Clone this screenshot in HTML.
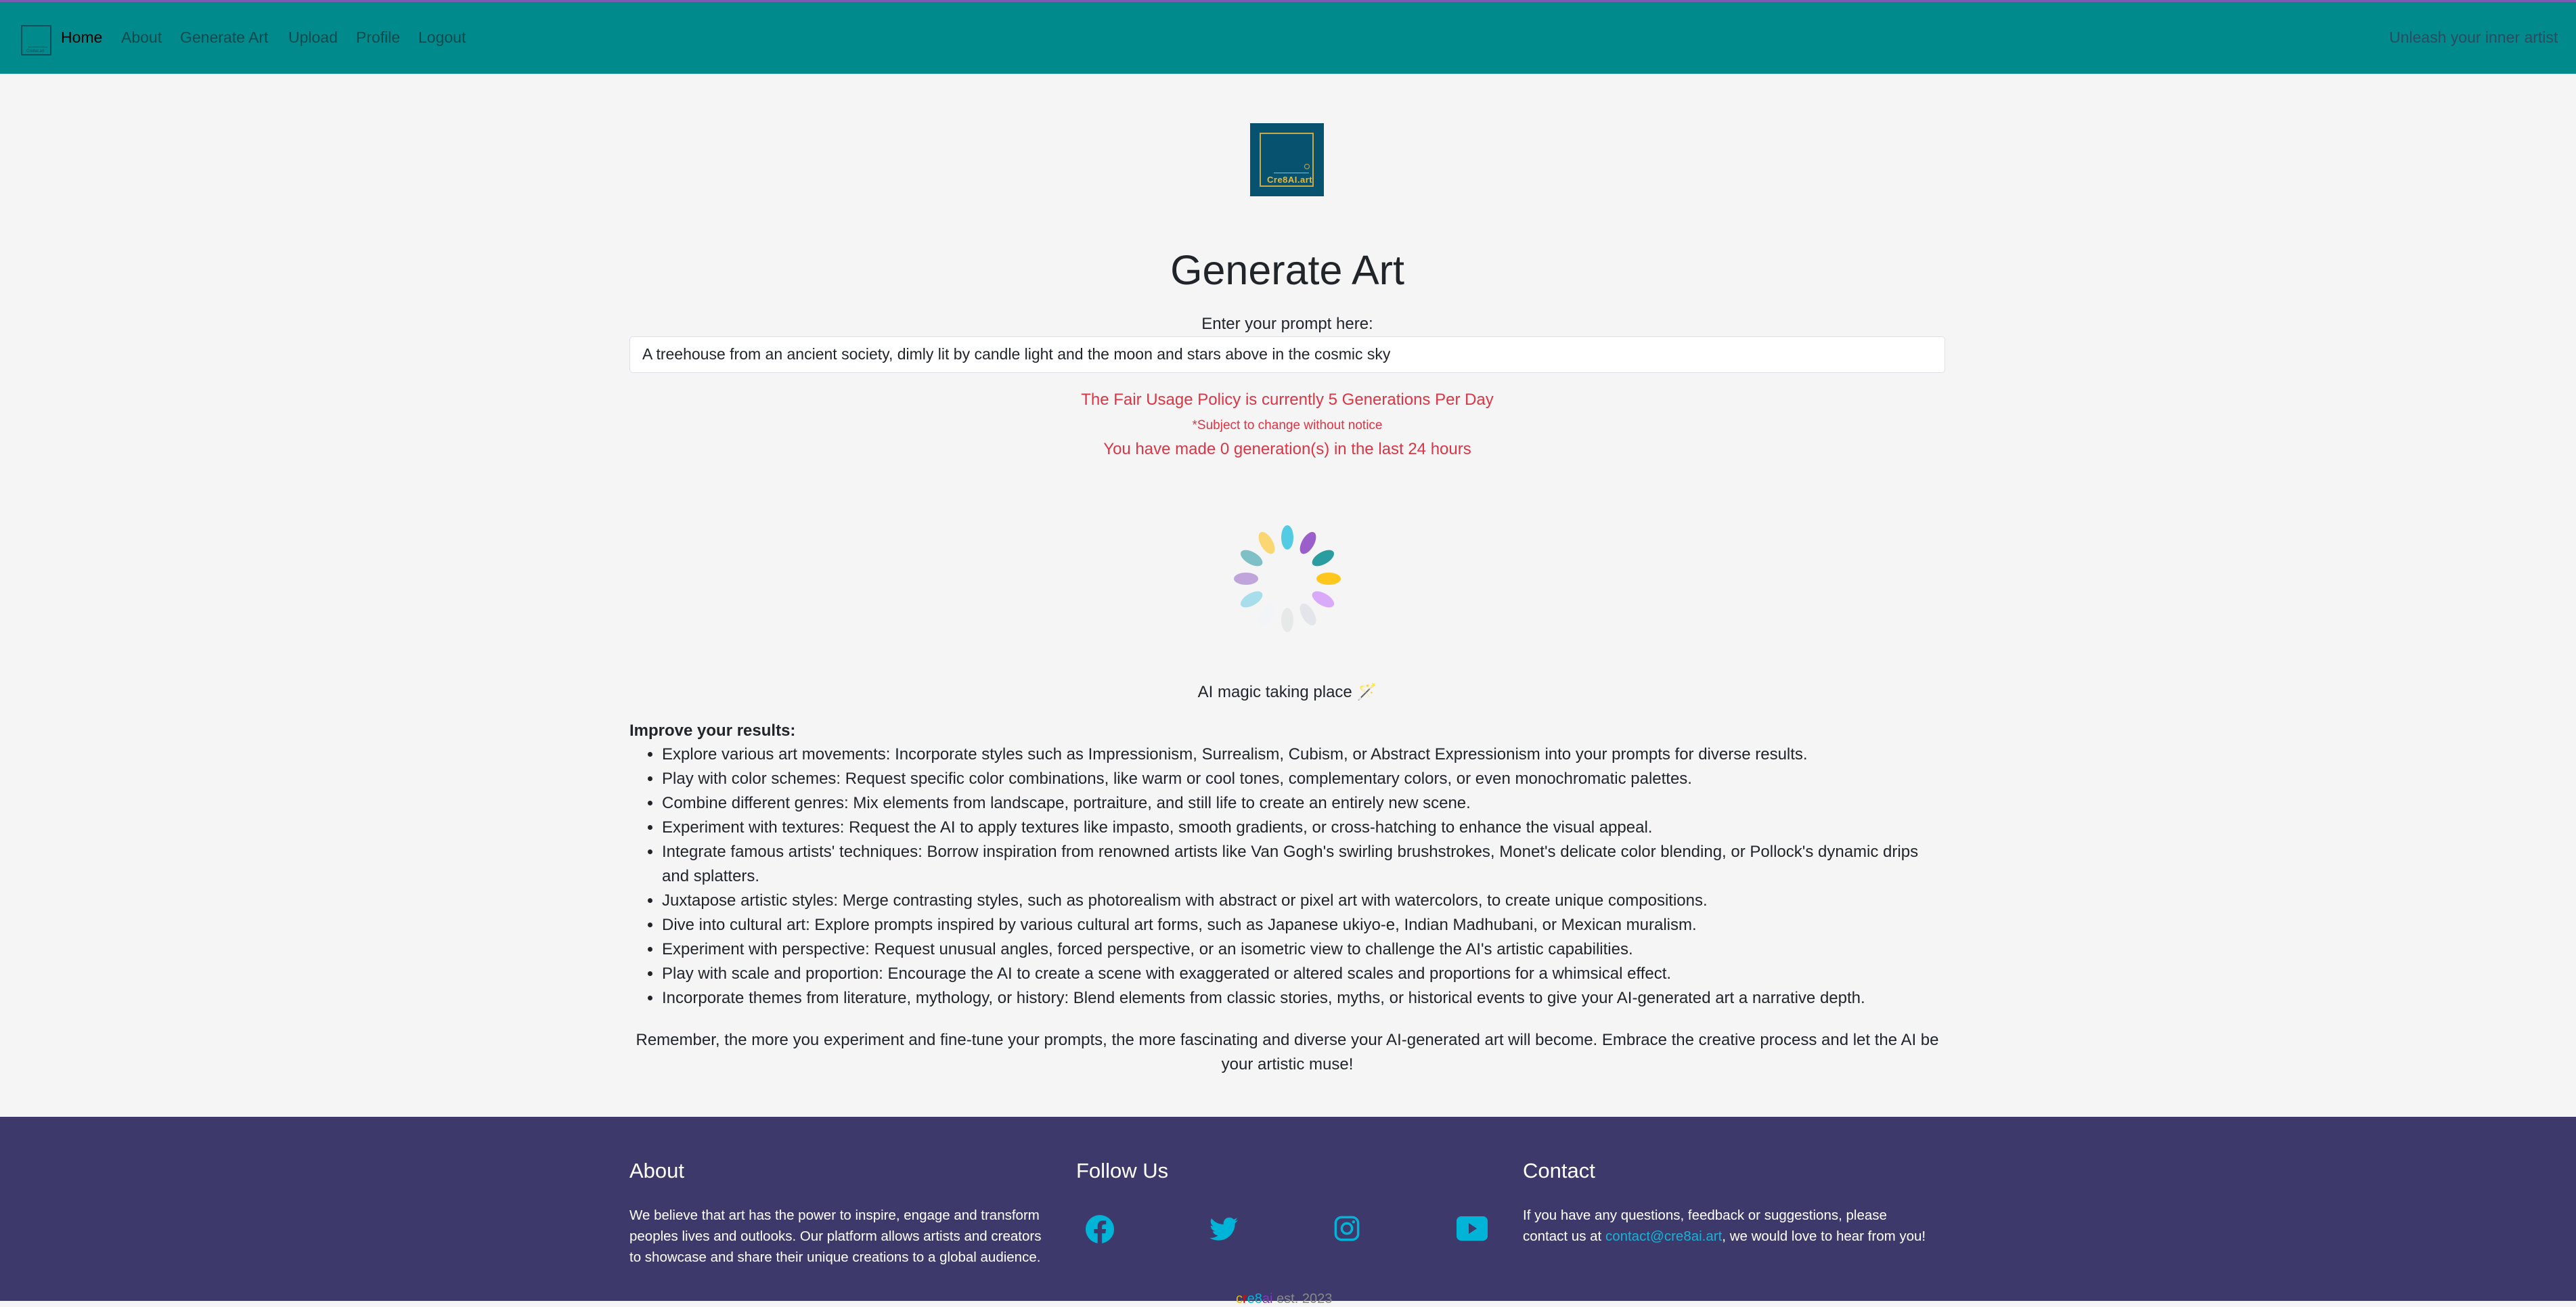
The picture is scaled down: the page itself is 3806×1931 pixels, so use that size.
<!DOCTYPE html>
<html><head><meta charset="utf-8"><style>
*{box-sizing:border-box;margin:0;padding:0}
body{width:3806px;height:1922px;overflow:hidden;background:#f5f5f5;font-family:"Liberation Sans",Arial,sans-serif;color:#212529;position:relative}
.nav{position:absolute;left:0;top:0;width:3806px;height:109px;background:#008a8c;border-top:3px solid #7c5cb3}
.nav .brand{position:absolute;left:31px;top:34px;width:45px;height:45px;border:2px solid #0b4f5c}
.nav a{position:absolute;top:39px;font-size:23px;color:#0b4a4d;text-decoration:none}
.abs{position:absolute}
.c{position:absolute;left:930px;width:1944px;text-align:center}
.red{color:#dc3545}
ul{position:absolute;left:978px;top:1097px;font-size:24px;line-height:36px;list-style:disc;white-space:nowrap}
li{padding-left:0}
.foot{position:absolute;left:0;top:1650px;width:3806px;height:272px;background:#3d3a6b;color:#fff}
.foot h5{position:absolute;top:62px;font-size:31px;font-weight:normal}
.foot p{position:absolute;top:130px;font-size:20.5px;line-height:31px;white-space:nowrap}
.petal{position:absolute;width:18px;height:36px;border-radius:50%;left:1893px;top:776px;transform-origin:9px 79px}
</style></head><body>
<div class="nav">
  <div class="brand"><div style="position:absolute;left:8px;right:4px;bottom:10px;height:1px;background:#0b4f5c"></div><div style="position:absolute;left:6px;bottom:1px;font-size:6px;color:#0b4f5c">Cre8ai.art</div></div>
  <a style="left:90px;color:#000">Home</a>
  <a style="left:179px">About</a>
  <a style="left:266px">Generate Art</a>
  <a style="left:426px">Upload</a>
  <a style="left:526px">Profile</a>
  <a style="left:618px">Logout</a>
  <a style="left:3530px;color:#2d4a60">Unleash your inner artist</a>
</div>

<div class="abs" style="left:1847px;top:182px;width:109px;height:108px;background:#07536f">
  <div style="position:absolute;left:14px;top:14px;width:80px;height:80px;border:2px solid #c9a845"></div>
  <div style="position:absolute;left:35px;top:73px;width:52px;height:1px;background:#d9b04a"></div>
  <div style="position:absolute;left:80px;top:60px;width:8px;height:8px;border:1px solid #c9a845;border-radius:50%"></div>
  <div style="position:absolute;left:25px;top:76px;font-size:13px;font-weight:bold;color:#e6b93c;letter-spacing:.5px">Cre8AI.art</div>
</div>

<div class="c" style="top:364px;font-size:61px">Generate Art</div>
<div class="c" style="top:465px;font-size:24px">Enter your prompt here:</div>
<div class="abs" style="left:930px;top:497px;width:1944px;height:54px;background:#fff;border:1px solid #dee2e6;border-radius:5px;font-size:23px;padding:12px 18px">A treehouse from an ancient society, dimly lit by candle light and the moon and stars above in the cosmic sky</div>
<div class="c red" style="top:577px;font-size:24px">The Fair Usage Policy is currently 5 Generations Per Day</div>
<div class="c red" style="top:618px;font-size:19px">*Subject to change without notice</div>
<div class="c red" style="top:650px;font-size:24px">You have made 0 generation(s) in the last 24 hours</div>

<div class="petal" style="background:#52cbe3;transform:rotate(0deg)"></div>
<div class="petal" style="background:#9b5fcb;transform:rotate(30deg)"></div>
<div class="petal" style="background:#2a9da0;transform:rotate(60deg)"></div>
<div class="petal" style="background:#ffc61e;transform:rotate(90deg)"></div>
<div class="petal" style="background:#d9aafa;transform:rotate(120deg)"></div>
<div class="petal" style="background:#e4e5ea;transform:rotate(150deg)"></div>
<div class="petal" style="background:#e7e9e8;transform:rotate(180deg)"></div>
<div class="petal" style="background:#f2f4f7;transform:rotate(210deg)"></div>
<div class="petal" style="background:#a8deeb;transform:rotate(240deg)"></div>
<div class="petal" style="background:#c0a4dc;transform:rotate(270deg)"></div>
<div class="petal" style="background:#7fbfc6;transform:rotate(300deg)"></div>
<div class="petal" style="background:#fad772;transform:rotate(330deg)"></div>

<div class="c" style="top:1008px;font-size:24px">AI magic taking place 🪄</div>
<div class="abs" style="left:930px;top:1066px;font-size:24px;font-weight:bold">Improve your results:</div>
<ul>
<li>Explore various art movements: Incorporate styles such as Impressionism, Surrealism, Cubism, or Abstract Expressionism into your prompts for diverse results.</li>
<li>Play with color schemes: Request specific color combinations, like warm or cool tones, complementary colors, or even monochromatic palettes.</li>
<li>Combine different genres: Mix elements from landscape, portraiture, and still life to create an entirely new scene.</li>
<li>Experiment with textures: Request the AI to apply textures like impasto, smooth gradients, or cross-hatching to enhance the visual appeal.</li>
<li>Integrate famous artists' techniques: Borrow inspiration from renowned artists like Van Gogh's swirling brushstrokes, Monet's delicate color blending, or Pollock's dynamic drips<br>and splatters.</li>
<li>Juxtapose artistic styles: Merge contrasting styles, such as photorealism with abstract or pixel art with watercolors, to create unique compositions.</li>
<li>Dive into cultural art: Explore prompts inspired by various cultural art forms, such as Japanese ukiyo-e, Indian Madhubani, or Mexican muralism.</li>
<li>Experiment with perspective: Request unusual angles, forced perspective, or an isometric view to challenge the AI's artistic capabilities.</li>
<li>Play with scale and proportion: Encourage the AI to create a scene with exaggerated or altered scales and proportions for a whimsical effect.</li>
<li>Incorporate themes from literature, mythology, or history: Blend elements from classic stories, myths, or historical events to give your AI-generated art a narrative depth.</li>
</ul>
<div class="c" style="top:1519px;font-size:24px;line-height:36px">Remember, the more you experiment and fine-tune your prompts, the more fascinating and diverse your AI-generated art will become. Embrace the creative process and let the AI be<br>your artistic muse!</div>

<div class="foot">
  <h5 style="left:930px">About</h5>
  <p style="left:930px">We believe that art has the power to inspire, engage and transform<br>peoples lives and outlooks. Our platform allows artists and creators<br>to showcase and share their unique creations to a global audience.</p>
  <h5 style="left:1590px">Follow Us</h5>
  <h5 style="left:2250px">Contact</h5>
  <p style="left:2250px">If you have any questions, feedback or suggestions, please<br>contact us at <span style="color:#17b3d6">contact@cre8ai.art</span>, we would love to hear from you!</p>
  <svg class="abs" style="left:1604px;top:145px" width="42" height="42" viewBox="0 0 24 24"><path fill="#00b4d8" d="M24 12a12 12 0 1 0-13.9 11.9v-8.4H7.1V12h3V9.4c0-3 1.8-4.7 4.5-4.7 1.3 0 2.7.2 2.7.2v3h-1.5c-1.5 0-2 .9-2 1.9V12h3.4l-.5 3.5h-2.9v8.4A12 12 0 0 0 24 12z"/></svg>
  <svg class="abs" style="left:1787px;top:147px" width="42" height="38" viewBox="0 0 24 20"><path fill="#00b4d8" d="M24 2.4c-.9.4-1.8.7-2.8.8 1-.6 1.8-1.6 2.2-2.7-1 .6-2 1-3.1 1.2A4.9 4.9 0 0 0 11.9 6 14 14 0 0 1 1.7.9a4.9 4.9 0 0 0 1.5 6.6c-.8 0-1.6-.3-2.2-.6 0 2.4 1.7 4.4 3.900 4.8-.7.2-1.5.2-2.2.1.6 2 2.4 3.4 4.6 3.4A9.9 9.9 0 0 1 0 17.3 14 14 0 0 0 7.5 19.5c9.1 0 14-7.5 14-14v-.6c1-.7 1.800-1.6 2.5-2.5z"/></svg>
  <svg class="abs" style="left:1971px;top:146px" width="38" height="38" viewBox="0 0 24 24"><rect x="1.5" y="1.5" width="21" height="21" rx="5.5" fill="none" stroke="#00b4d8" stroke-width="2.2"/><circle cx="12" cy="12" r="4.8" fill="none" stroke="#00b4d8" stroke-width="2.2"/><circle cx="18.2" cy="5.8" r="1.4" fill="#00b4d8"/></svg>
  <svg class="abs" style="left:2152px;top:147px" width="46" height="36" viewBox="0 0 46 36"><rect x="0" y="0" width="46" height="36" rx="7" fill="#00b4d8"/><path d="M18 10 L30 18 L18 26 Z" fill="#3d3a6b"/></svg>
  <div class="abs" style="left:1826px;top:258px;font-size:20px;color:#888"><span style="color:#f0b400">c</span><span style="color:#e00">r</span><span style="color:#00b4d8">e</span><span style="color:#00b4d8">8</span><span style="color:#7d3cc0">ai</span> est. 2023</div>
</div>
</body></html>
